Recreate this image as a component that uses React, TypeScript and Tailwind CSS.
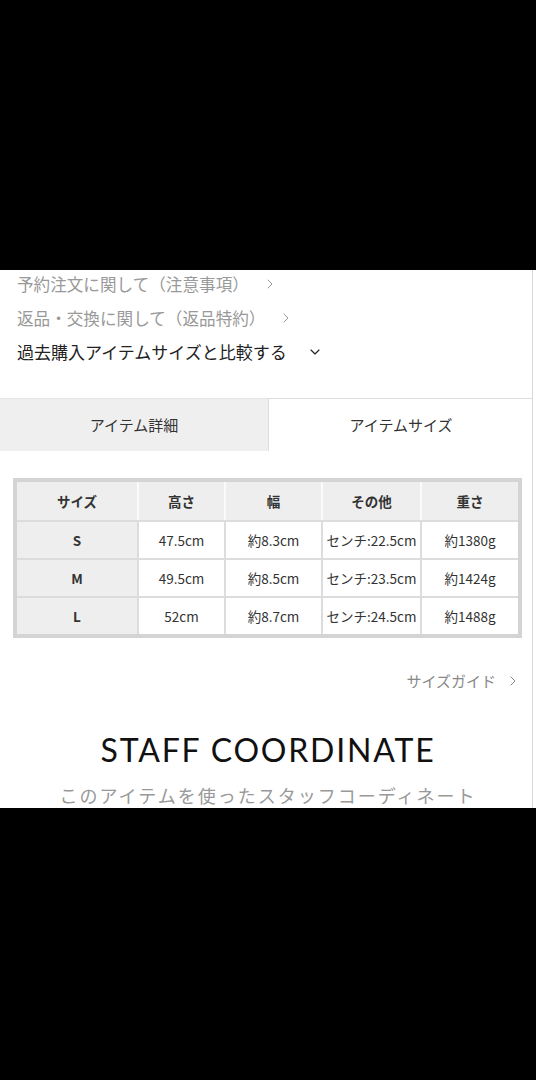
import { ChevronRight, ChevronDown } from "lucide-react"

const jp = { fontFamily: '"Noto Sans CJK JP", "Noto Sans", sans-serif' }

const rows = [
  ["S", "47.5cm", "約8.3cm", "センチ:22.5cm", "約1380g"],
  ["M", "49.5cm", "約8.5cm", "センチ:23.5cm", "約1424g"],
  ["L", "52cm", "約8.7cm", "センチ:24.5cm", "約1488g"],
]

const widths = ["w-[120px]", "w-[87px]", "w-[97px]", "w-[99px]", "w-[98px]"]

export default function App() {
  return (
    <div className="w-[536px] h-[1080px] bg-black flex flex-col" style={jp}>
      <div className="h-[270px] shrink-0" />
      <div className="h-[538px] shrink-0 bg-white overflow-hidden relative">
        <div className="absolute right-[3px] top-0 bottom-0 w-px bg-[#d8d8d8]" />
        <div className="pl-[17px] -mt-[3px]">
          <div className="h-[34px] flex items-center text-[16.6px] text-[#999] gap-[13px]">
            予約注文に関して（注意事項）
            <ChevronRight className="w-[16px] h-[16px]" strokeWidth={1.5} />
          </div>
          <div className="h-[34px] flex items-center text-[16.6px] text-[#999] gap-[13px]">
            返品・交換に関して（返品特約）
            <ChevronRight className="w-[16px] h-[16px]" strokeWidth={1.5} />
          </div>
          <div className="h-[34px] flex items-center text-[17px] text-[#222] gap-[20px]">
            過去購入アイテムサイズと比較する
            <ChevronDown className="w-[16px] h-[16px]" strokeWidth={1.75} />
          </div>
        </div>

        <div className="mt-[29px] flex h-[53px]">
          <div className="w-[268px] bg-[#efefef] flex items-center justify-center text-[15px] text-[#333] border-t border-[#e4e4e4]">
            アイテム詳細
          </div>
          <div className="w-[265px] bg-white flex items-center justify-center text-[15px] text-[#333] border-t border-l border-[#dcdcdc]">
            アイテムサイズ
          </div>
        </div>

        <div className="mt-[27px] ml-[13px] w-[509px] border-[4px] border-[#d4d4d4] text-[13.5px] text-[#333]">
          <div className="flex h-[38px] bg-[#eeeeee] font-bold">
            {["サイズ", "高さ", "幅", "その他", "重さ"].map((h, i) => (
              <div
                key={h}
                className={`${widths[i]} flex items-center justify-center ${i > 0 ? "border-l-2 border-[#fafafa]" : ""}`}
              >
                {h}
              </div>
            ))}
          </div>
          {rows.map((r) => (
            <div key={r[0]} className="flex h-[38px] border-t-2 border-[#dcdcdc]">
              {r.map((c, i) => (
                <div
                  key={i}
                  className={`${widths[i]} flex items-center justify-center ${
                    i === 0 ? "bg-[#eeeeee] font-bold" : "bg-white border-l-2 border-[#dcdcdc]"
                  }`}
                >
                  {c}
                </div>
              ))}
            </div>
          ))}
        </div>

        <div className="mt-[32px] flex justify-end pr-[15px]">
          <div className="flex items-center gap-[9px] text-[15px] text-[#888]">
            サイズガイド
            <ChevronRight className="w-[16px] h-[16px]" strokeWidth={1.5} />
          </div>
        </div>

        <div
          className="mt-[33px] text-center text-[32px] tracking-[1.8px] text-[#111]"
          style={{ fontFamily: '"Lato", "Liberation Sans", sans-serif' }}
        >
          STAFF COORDINATE
        </div>
        <div className="mt-[8px] text-center text-[18px] tracking-[2px] text-[#999]">
          このアイテムを使ったスタッフコーディネート
        </div>
      </div>
      <div className="flex-1" />
    </div>
  )
}
